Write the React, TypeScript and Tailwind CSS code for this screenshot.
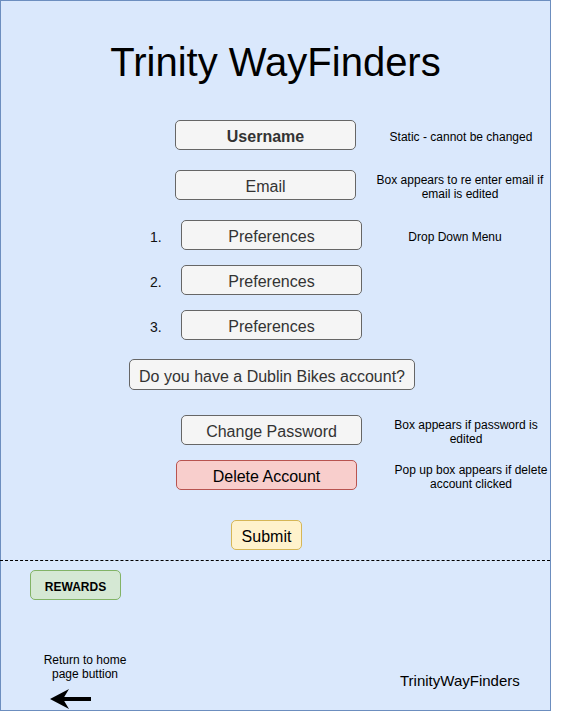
import React from "react";

const boxCls =
  "h-[30px] pt-[4px] rounded-[5px] border border-[#666666] bg-[#f5f5f5] text-[#333333] text-[16px] flex items-center justify-center shrink-0";

const noteCls = "w-[180px] mt-[4px] text-center text-[12px] leading-[14px] text-black shrink-0";

const Note: React.FC<{ className?: string; children: React.ReactNode }> = ({ className = "", children }) => (
  <div className={`${noteCls} ${className}`}>{children}</div>
);

const PrefRow: React.FC<{ n: number; note?: string; className?: string }> = ({ n, note, className = "" }) => (
  <div className={`flex items-center h-[30px] ${className}`}>
    <span className="ml-[149px] mt-[4px] w-[31px] text-[14px] text-[#111]">{n}.</span>
    <div className={`${boxCls} w-[181px]`}>Preferences</div>
    {note && <Note className="ml-[3px]">{note}</Note>}
  </div>
);

export default function App() {
  return (
    <div
      className="w-[551px] h-[711px] bg-[#dae8fc] border border-[#6c8ebf] flex flex-col overflow-visible relative"
      style={{ fontFamily: '"Liberation Sans", Arial, sans-serif' }}>
      {/* Title */}
      <h1 className="mt-[38px] text-center text-[40px] leading-[46px] text-black">Trinity WayFinders</h1>

      {/* Username */}
      <div className="flex items-center h-[30px] mt-[35px]">
        <div className={`${boxCls} w-[181px] ml-[174px] font-bold`}>Username</div>
        <Note className="ml-[15px]">Static - cannot be changed</Note>
      </div>

      {/* Email */}
      <div className="flex items-center h-[30px] mt-[20px]">
        <div className={`${boxCls} w-[181px] ml-[174px]`}>Email</div>
        <Note className="ml-[14px]">
          Box appears to re enter email if
          <br />
          email is edited
        </Note>
      </div>

      <PrefRow n={1} note="Drop Down Menu" className="mt-[20px]" />
      <PrefRow n={2} className="mt-[15px]" />
      <PrefRow n={3} className="mt-[15px]" />

      {/* Dublin bikes */}
      <div className="flex mt-[19px]">
        <div className={`${boxCls} h-[31px] w-[286px] ml-[128px]`}>Do you have a Dublin Bikes account?</div>
      </div>

      {/* Change password */}
      <div className="flex items-center h-[30px] mt-[25px]">
        <div className={`${boxCls} w-[181px] ml-[180px]`}>Change Password</div>
        <Note className="ml-[14px]">
          Box appears if password is
          <br />
          edited
        </Note>
      </div>

      {/* Delete account */}
      <div className="flex items-center h-[30px] mt-[15px]">
        <div className="h-[30px] pt-[4px] w-[181px] ml-[175px] rounded-[5px] border border-[#b85450] bg-[#f8cecc] text-black text-[16px] flex items-center justify-center shrink-0">
          Delete Account
        </div>
        <Note className="ml-[24px]">
          Pop up box appears if delete
          <br />
          account clicked
        </Note>
      </div>

      {/* Submit */}
      <div className="flex mt-[30px]">
        <button className="h-[30px] pt-[4px] w-[71px] ml-[230px] rounded-[5px] border border-[#d6b656] bg-[#fff2cc] text-black text-[16px] flex items-center justify-center">
          Submit
        </button>
      </div>

      {/* Divider */}
      <div className="mt-[10px] border-t border-dashed border-black -ml-px" />

      {/* Rewards */}
      <div className="flex mt-[9px]">
        <button className="h-[30px] pt-[3px] w-[91px] ml-[29px] rounded-[5px] border border-[#82b366] bg-[#d5e8d4] text-black text-[12px] font-bold flex items-center justify-center">
          REWARDS
        </button>
      </div>

      {/* Bottom area */}
      <div className="flex">
        <div className="ml-[34px] w-[100px] flex flex-col">
          <div className="mt-[53px] text-center text-[12px] leading-[14px] text-black">
            Return to home
            <br />
            page buttion
          </div>
          <svg width="42" height="22" viewBox="0 0 42 22" className="mt-[7px] ml-[15px] self-start">
            <rect x="12" y="9" width="29" height="4" fill="#000" />
            <polygon points="0,11 19,1 13,11 19,21" fill="#000" />
          </svg>
        </div>
        <div className="ml-[265px] mt-[72px] text-[15px] leading-[18px] text-black">TrinityWayFinders</div>
      </div>
    </div>
  );
}
